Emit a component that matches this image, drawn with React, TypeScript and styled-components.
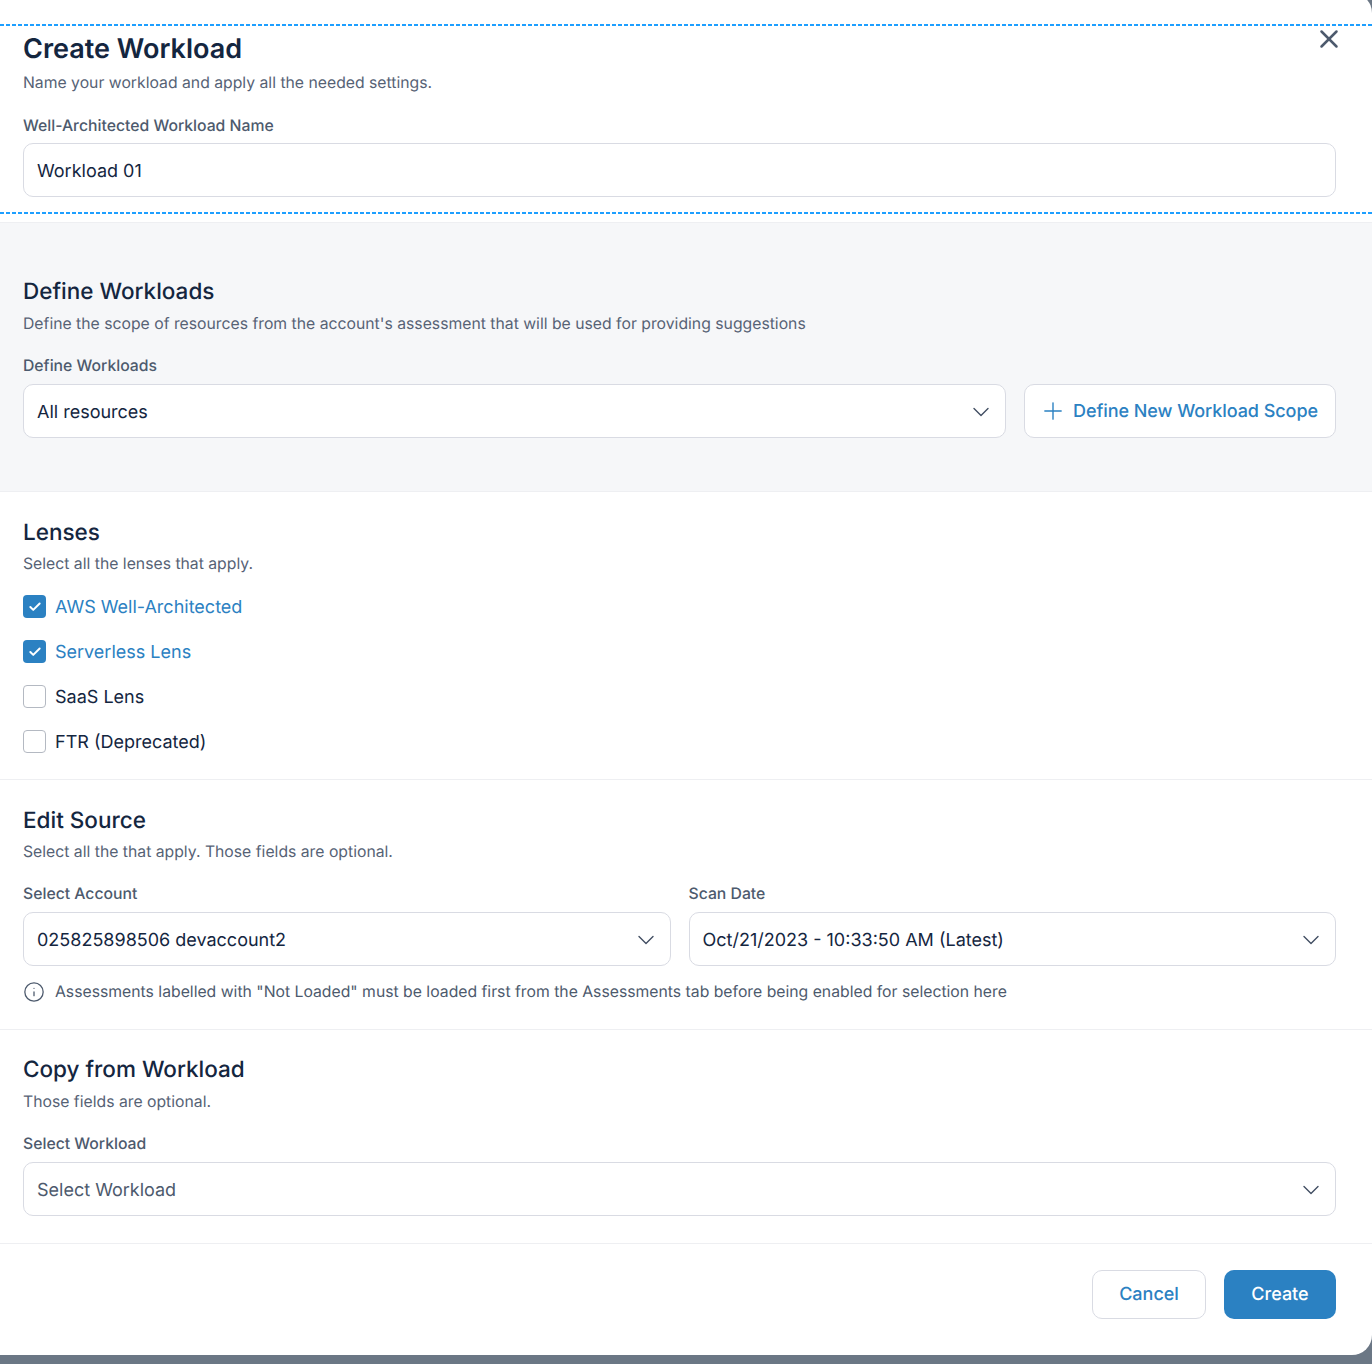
import styled, { createGlobalStyle } from "styled-components";
import { ChevronDown, Check, Info, Plus, X } from "lucide-react";

const GlobalStyle = createGlobalStyle`
    html, body {
        margin: 0;
        padding: 0;
        background: #6b7785;
    }
    * {
        box-sizing: border-box;
    }
`;

const lenses = [
    { name: "AWS Well-Architected", checked: true },
    { name: "Serverless Lens", checked: true },
    { name: "SaaS Lens", checked: false },
    { name: "FTR (Deprecated)", checked: false },
];

const App = () => {
    return (
        <Page>
            <GlobalStyle />
            <Modal>
                <DottedRule />
                <CloseButton>
                    <X size={30} strokeWidth={2} />
                </CloseButton>
                <NameSection>
                    <ModalTitle>Create Workload</ModalTitle>
                    <Subtitle>Name your workload and apply all the needed settings.</Subtitle>
                    <FieldLabel $top={22}>Well-Architected Workload Name</FieldLabel>
                    <InputBox>Workload 01</InputBox>
                </NameSection>
                <DottedRule />

                <ScopeSection>
                    <SectionTitle>Define Workloads</SectionTitle>
                    <Subtitle>Define the scope of resources from the account's assessment that will be used for providing suggestions</Subtitle>
                    <FieldLabel $top={22}>Define Workloads</FieldLabel>
                    <ScopeRow>
                        <SelectBox>
                            All resources
                            <ChevronDown size={28} strokeWidth={1.2} color="#414e62" />
                        </SelectBox>
                        <ScopeButton $width={312}>
                            <Plus size={28} strokeWidth={1.2} />
                            Define New Workload Scope
                        </ScopeButton>
                    </ScopeRow>
                </ScopeSection>

                <LensSection>
                    <SectionTitle>Lenses</SectionTitle>
                    <Subtitle>Select all the lenses that apply.</Subtitle>
                    <LensList>
                        {lenses.map((lens) => (
                            <LensRow key={lens.name}>
                                <CheckBox $checked={lens.checked}>
                                    {lens.checked && <Check size={14} strokeWidth={3.4} color="#fff" />}
                                </CheckBox>
                                <LensName $checked={lens.checked}>{lens.name}</LensName>
                            </LensRow>
                        ))}
                    </LensList>
                </LensSection>

                <SourceSection>
                    <SectionTitle>Edit Source</SectionTitle>
                    <Subtitle>Select all the that apply. Those fields are optional.</Subtitle>
                    <SourceGrid>
                        <div>
                            <FieldLabel $top={0}>Select Account</FieldLabel>
                            <SelectBox>
                                025825898506 devaccount2
                                <ChevronDown size={28} strokeWidth={1.2} color="#414e62" />
                            </SelectBox>
                        </div>
                        <div>
                            <FieldLabel $top={0}>Scan Date</FieldLabel>
                            <SelectBox>
                                Oct/21/2023 - 10:33:50 AM (Latest)
                                <ChevronDown size={28} strokeWidth={1.2} color="#414e62" />
                            </SelectBox>
                        </div>
                    </SourceGrid>
                    <NoteRow>
                        <Info size={22} strokeWidth={1.4} color="#4d5a6d" />
                        Assessments labelled with "Not Loaded" must be loaded first from the Assessments tab before being enabled for selection here
                    </NoteRow>
                </SourceSection>

                <CopySection>
                    <SectionTitle>Copy from Workload</SectionTitle>
                    <Subtitle>Those fields are optional.</Subtitle>
                    <FieldLabel $top={22}>Select Workload</FieldLabel>
                    <SelectBox $placeholder>
                        Select Workload
                        <ChevronDown size={28} strokeWidth={1.2} color="#414e62" />
                    </SelectBox>
                </CopySection>

                <Footer>
                    <OutlineButton $width={114} $height={49}>Cancel</OutlineButton>
                    <PrimaryButton>Create</PrimaryButton>
                </Footer>
            </Modal>
        </Page>
    );
};

const Page = styled.div`
    width: 1372px;
    height: 1364px;
    overflow: hidden;
    background: #6b7785;
    font-family: Inter, "Liberation Sans", sans-serif;
    color: #14263f;
    text-rendering: geometricPrecision;
`;

// the modal starts above the visible area, only its corner radius shows at the top
const Modal = styled.div`
    position: relative;
    width: 1372px;
    height: 1362px;
    margin-top: -7px;
    padding-top: 31px;
    background: #fff;
    border-radius: 0 20px 20px 0;
    overflow: hidden;
`;

const DottedRule = styled.div`
    height: 2px;
    background: repeating-linear-gradient(90deg, #1e9fff 0 4px, transparent 4px 6px);
`;

const CloseButton = styled.div`
    position: absolute;
    top: 31px;
    right: 28px;
    height: 30px;
    color: #4d5a6d;
`;

const Subtitle = styled.p`
    margin: 7px 0 0;
    font-size: 15.75px;
    line-height: 20px;
    color: #566275;
`;

const FieldLabel = styled.div<{ $top: number }>`
    margin-top: ${(props) => props.$top}px;
    margin-bottom: 8px;
    font-size: 15.75px;
    line-height: 20px;
    font-weight: 500;
    color: #4d5a6d;
`;

const NameSection = styled.section`
    height: 186px;
    padding: 8px 36px 0 23px;

    ${Subtitle} {
        margin-top: 9px;
    }

    ${FieldLabel} {
        margin-top: 23px;
        margin-bottom: 7px;
    }
`;

const ModalTitle = styled.h1`
    margin: 0;
    font-size: 27px;
    line-height: 30px;
    font-weight: 600;
    color: #14263f;
`;

const SectionTitle = styled.h2`
    margin: 0;
    font-size: 22.5px;
    line-height: 30px;
    font-weight: 500;
    color: #14263f;
`;

const InputBox = styled.div`
    display: flex;
    align-items: center;
    height: 54px;
    padding: 2px 13px 0;
    font-size: 18px;
    color: #14263f;
    background: #fff;
    border: 1px solid #d9dbe3;
    border-radius: 10px;
`;

const SelectBox = styled(InputBox)<{ $placeholder?: boolean }>`
    flex: 1;
    justify-content: space-between;
    padding-right: 10px;
    color: ${(props) => (props.$placeholder ? "#4d5a6d" : "#14263f")};
`;

const ScopeSection = styled.section`
    height: 270px;
    margin-top: 8px;
    padding: 54px 36px 0 23px;
    background: #f6f7f9;
    border-top: 1px solid #eeeff2;
    border-bottom: 1px solid #eeeff2;
`;

const ScopeRow = styled.div`
    display: flex;
    gap: 18px;
`;

const OutlineButton = styled.div<{ $width: number; $height?: number }>`
    display: flex;
    align-items: center;
    justify-content: center;
    gap: 6px;
    width: ${(props) => props.$width}px;
    height: ${(props) => props.$height || 54}px;
    font-size: 18px;
    font-weight: 500;
    color: #2b81c2;
    background: #fff;
    border: 1px solid #d9dbe3;
    border-radius: 10px;
`;

const ScopeButton = styled(OutlineButton)`
    padding-right: 3px;
    letter-spacing: -0.06px;
`;

const LensSection = styled.section`
    height: 288px;
    padding: 26px 36px 0 23px;
    border-bottom: 1px solid #eeeff2;

    ${Subtitle} {
        margin-top: 6px;
    }
`;

const LensList = styled.div`
    display: flex;
    flex-direction: column;
    gap: 22px;
    margin-top: 21px;
`;

const LensRow = styled.div`
    display: flex;
    align-items: center;
    gap: 9px;
    height: 23px;
`;

const CheckBox = styled.div<{ $checked: boolean }>`
    display: flex;
    align-items: center;
    justify-content: center;
    width: 23px;
    height: 23px;
    background: ${(props) => (props.$checked ? "#2b81c2" : "#fff")};
    border: ${(props) => (props.$checked ? "none" : "1px solid #b4b9c2")};
    border-radius: 4px;
`;

const LensName = styled.span<{ $checked: boolean }>`
    padding-top: 2px;
    font-size: 18px;
    color: ${(props) => (props.$checked ? "#2b81c2" : "#14263f")};
`;

const SourceSection = styled.section`
    height: 250px;
    padding: 26px 36px 0 23px;
    border-bottom: 1px solid #eeeff2;

    ${Subtitle} {
        margin-top: 6px;
    }
`;

const SourceGrid = styled.div`
    display: grid;
    grid-template-columns: 1fr 1fr;
    gap: 18px;
    margin-top: 22px;
`;

const NoteRow = styled.div`
    display: flex;
    align-items: center;
    gap: 10px;
    margin-top: 15px;
    font-size: 15.75px;
    line-height: 20px;
    color: #4d5a6d;
`;

const CopySection = styled.section`
    height: 214px;
    padding: 25px 36px 0 23px;
    border-bottom: 1px solid #eeeff2;
`;

const Footer = styled.footer`
    display: flex;
    justify-content: flex-end;
    gap: 18px;
    padding: 26px 36px 0 0;
`;

const PrimaryButton = styled.div`
    display: flex;
    align-items: center;
    justify-content: center;
    width: 112px;
    height: 49px;
    font-size: 18px;
    font-weight: 500;
    color: #fff;
    background: #2b81c2;
    border-radius: 10px;
`;

export default App;
